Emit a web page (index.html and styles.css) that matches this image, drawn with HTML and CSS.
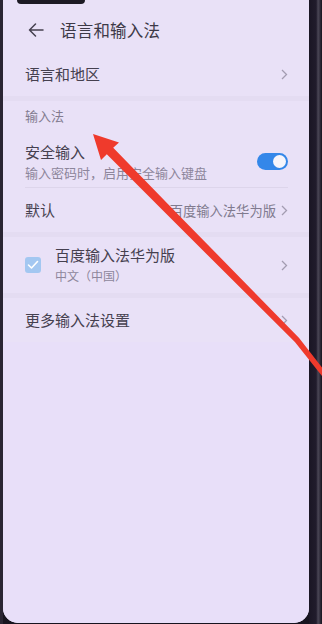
FILE: index.html
```html
<!DOCTYPE html>
<html lang="zh">
<head>
<meta charset="utf-8">
<link rel="stylesheet" href="styles.css">
</head>
<body>
<div class="phone">
  <div class="edge-left"></div>
  <div class="screen">
    <div class="notch"></div>
    <header class="topbar">
      <svg class="back" width="16" height="14" viewBox="0 0 16 14"><path d="M15 7H1.5M7.5 1L1.5 7l6 6" fill="none" stroke="#45404f" stroke-width="1.5" stroke-linecap="round" stroke-linejoin="round"/></svg>
      <h1 class="title">语言和输入法</h1>
    </header>

    <section class="group">
      <div class="row">
        <span class="label">语言和地区</span>
        <svg class="chev" width="7" height="11" viewBox="0 0 7 11"><path d="M1 1l4.5 4.5L1 10" fill="none" stroke="#a39cb1" stroke-width="1.3"/></svg>
      </div>
    </section>

    <section class="group">
      <div class="section-title">输入法</div>
      <div class="row two">
        <div class="text">
          <div class="label">安全输入</div>
          <div class="sub">输入密码时，启用安全输入键盘</div>
        </div>
        <div class="toggle"><span class="knob"></span></div>
      </div>
      <div class="divider"></div>
      <div class="row">
        <span class="label">默认</span>
        <span class="value">百度输入法华为版</span>
        <svg class="chev" width="7" height="11" viewBox="0 0 7 11"><path d="M1 1l4.5 4.5L1 10" fill="none" stroke="#a39cb1" stroke-width="1.3"/></svg>
      </div>
    </section>

    <section class="group">
      <div class="row ime">
        <span class="check"><svg width="12" height="10" viewBox="0 0 12 10"><path d="M1.5 5l3 3 6-6.5" fill="none" stroke="#ffffff" stroke-width="1.6" stroke-linecap="round" stroke-linejoin="round"/></svg></span>
        <div class="text">
          <div class="label">百度输入法华为版</div>
          <div class="sub">中文（中国）</div>
        </div>
        <svg class="chev" width="7" height="11" viewBox="0 0 7 11"><path d="M1 1l4.5 4.5L1 10" fill="none" stroke="#a39cb1" stroke-width="1.3"/></svg>
      </div>
    </section>

    <section class="group">
      <div class="row last">
        <span class="label">更多输入法设置</span>
        <svg class="chev" width="7" height="11" viewBox="0 0 7 11"><path d="M1 1l4.5 4.5L1 10" fill="none" stroke="#a39cb1" stroke-width="1.3"/></svg>
      </div>
    </section>

    <div class="rest"></div>
  </div>
  <div class="edge-right"></div>

  <svg class="annot" width="322" height="624" viewBox="0 0 322 624">
    <polygon fill="#ef3a2c" points="93,134 119,142.5 113.2,147.8 180.8,217.2 299.1,337.9 332,380.5 328,383.5 294.9,342.1 175.2,222.8 106.8,154.2 101,160"/>
  </svg>
</div>
</body>
</html>
```

FILE: styles.css
```css
* { box-sizing: border-box; margin: 0; padding: 0; }

html, body {
  width: 322px;
  height: 624px;
  overflow: hidden;
}

body {
  background: #17141f;
  font-family: "Noto Sans CJK SC", "Noto Sans", sans-serif;
  color: #45404f;
}

.phone {
  position: relative;
  display: flex;
  width: 322px;
  height: 624px;
}

.edge-left {
  width: 3px;
  background: #2a2533;
}

.screen {
  position: relative;
  width: 306px;
  height: 623px;
  background: #e4dcf2;
  border-radius: 0 0 15px 15px;
  display: flex;
  flex-direction: column;
  overflow: hidden;
}

.edge-right {
  width: 13px;
  background: linear-gradient(90deg, #1a1624 0, #211c2c 55%, #4b4756 70%, #3a3645 80%, #16131d 100%);
}

.notch {
  position: absolute;
  left: 14px;
  top: 0;
  width: 68px;
  height: 4px;
  background: #1d1a24;
  border-radius: 0 0 6px 6px;
}

.topbar {
  height: 52px;
  padding: 8px 0 0 25px;
  display: flex;
  align-items: center;
  background: #e9e1f7;
}

.back {
  margin-right: 16px;
}

.title {
  font-size: 16.5px;
  font-weight: 400;
  color: #3d3947;
  letter-spacing: 0.2px;
}

.group {
  background: #e9e1f7;
  margin-bottom: 5px;
}

.row {
  display: flex;
  align-items: center;
  height: 44px;
  padding: 0 21px 0 22px;
}

.row .label {
  font-size: 15px;
  line-height: 20px;
  color: #45404f;
}

.row > .label {
  flex: 1;
}

.section-title {
  height: 30px;
  line-height: 30px;
  padding-left: 22px;
  font-size: 13px;
  color: #827b8f;
}

.row.two {
  height: 56px;
  padding-top: 10px;
  padding-bottom: 5px;
  align-items: center;
}

.text {
  flex: 1;
  display: flex;
  flex-direction: column;
  gap: 2px;
}

.sub {
  font-size: 13px;
  line-height: 18px;
  color: #8d869b;
}

.toggle {
  width: 31px;
  height: 17px;
  border-radius: 9px;
  background: #3487e9;
  display: flex;
  align-items: center;
  justify-content: flex-end;
  padding-right: 2px;
}

.knob {
  width: 13px;
  height: 13px;
  border-radius: 50%;
  background: #f7f5fb;
}

.divider {
  height: 1px;
  margin: 0 21px 0 22px;
  background: #ddd5eb;
}

.value {
  font-size: 13.3px;
  color: #807a8e;
  margin-right: 5px;
}

.chev {
  flex: none;
}

.row.ime {
  height: 56px;
  padding-top: 0;
}

.check {
  width: 16px;
  height: 16px;
  border-radius: 3px;
  background: #a3c7f1;
  display: flex;
  align-items: center;
  justify-content: center;
  margin-right: 14px;
}

.ime .text .sub {
  font-size: 12px;
}

.row.last {
  height: 44px;
}

.rest {
  flex: 1;
  background: #e8dff9;
  margin-top: -5px;
}

.annot {
  position: absolute;
  left: 0;
  top: 0;
  pointer-events: none;
}
```
